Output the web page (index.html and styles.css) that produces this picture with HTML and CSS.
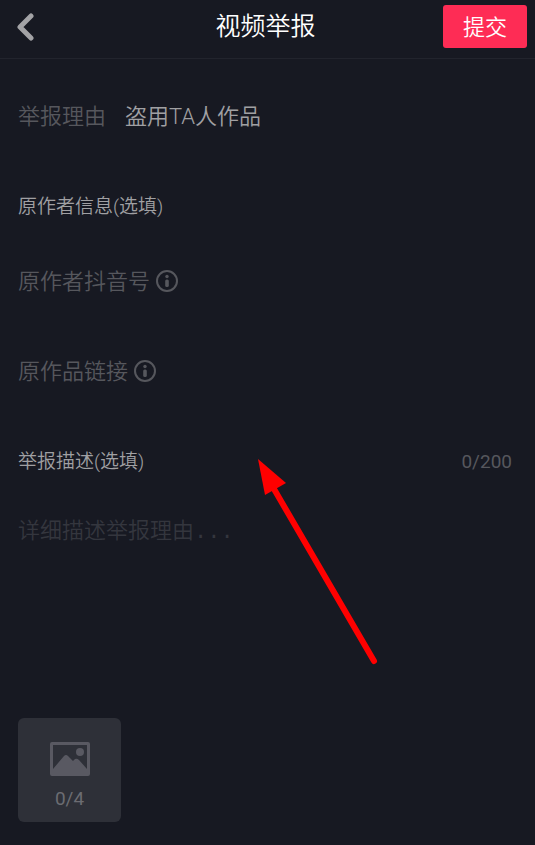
FILE: index.html
```html
<!DOCTYPE html>
<html lang="zh-CN">
<head>
    <meta charset="UTF-8">
    <meta name="viewport" content="width=device-width, initial-scale=1.0">
    <title>视频举报</title>
    <link rel="stylesheet" href="styles.css">
</head>
<body>
    <form class="report">
        <header class="header">
            <button type="button" class="back" aria-label="返回">
                <svg width="18" height="30" viewBox="0 0 18 30">
                    <path d="M14 4 L3 15 L14 26" />
                </svg>
            </button>
            <h1>视频举报</h1>
            <button type="submit" class="submit">提交</button>
        </header>

        <main class="content">
            <div class="row reason">
                <span class="label">举报理由</span>
                <span class="value">盗用TA人作品</span>
            </div>

            <h2>原作者信息(选填)</h2>
            <div class="row author">
                <label class="label" for="author">原作者抖音号</label>
                <svg class="info" width="24" height="24" viewBox="0 0 24 24">
                    <circle class="ring" cx="12" cy="11" r="10" />
                    <circle cx="12" cy="6.5" r="1.7" />
                    <rect x="10.2" y="9.5" width="3.6" height="7.5" rx="1.5" />
                </svg>
                <input type="text" id="author">
            </div>
            <div class="row">
                <label class="label" for="link">原作品链接</label>
                <svg class="info" width="24" height="24" viewBox="0 0 24 24">
                    <circle class="ring" cx="12" cy="11" r="10" />
                    <circle cx="12" cy="6.5" r="1.7" />
                    <rect x="10.2" y="9.5" width="3.6" height="7.5" rx="1.5" />
                </svg>
                <input type="text" id="link">
            </div>

            <div class="row desc-title">
                <h2><label for="desc">举报描述(选填)</label></h2>
                <span class="count">0/200</span>
            </div>
            <textarea id="desc" maxlength="200" placeholder="详细描述举报理由..."></textarea>

            <button type="button" class="photo">
                <svg width="40" height="36" viewBox="0 0 40 36">
                    <path fill-rule="evenodd" d="M2 1 H38 Q40 1 40 3 V33 Q40 35 38 35 H2 Q0 35 0 33 V3 Q0 1 2 1 Z M3 4 V28 L14 15 Q16 13 18 15 L23 20 L25 18 Q27 17 29 19 L37 28 V4 Z" />
                    <circle cx="30" cy="11" r="4" />
                </svg>
                <span>0/4</span>
            </button>
        </main>

        <svg class="arrow" width="120" height="208" viewBox="0 0 120 208">
            <path d="M16 31 L116 203" />
            <polygon points="0,1 28,25 7,37" />
        </svg>
    </form>
</body>
</html>
```
FILE: styles.css
```css
* {
    box-sizing: border-box;
}
body {
    margin: 0;
    background-color: #171922;
    color: #a0a0a3;
    font-family: Roboto, "Noto Sans CJK SC", sans-serif;
    font-size: 22px;
    font-weight: 350;
    line-height: 30px;
}
.report {
    position: relative;
    min-height: 100vh;
}
button, input, textarea {
    margin: 0;
    padding: 0;
    border: none;
    outline: none;
    background: none;
    color: inherit;
    font: inherit;
}
button {
    cursor: pointer;
}

/* Header */
.header {
    display: grid;
    grid-template-columns: 1fr auto 1fr;
    align-items: center;
    padding: 5px 8px 10px 4px;
    border-bottom: 1px solid #22242d;
}
.header h1 {
    margin: 0;
    color: #fff;
    font-size: 25px;
    font-weight: inherit;
}
.back {
    justify-self: start;
    display: flex;
    padding: 0 13px;
}
.back path {
    fill: none;
    stroke: #a3a3a6;
    stroke-width: 5;
    stroke-linecap: round;
    stroke-linejoin: round;
}
.submit {
    justify-self: end;
    height: 43px;
    padding: 2px 20px 0;
    border-radius: 3px;
    background-color: #fe2c55;
    color: #fff;
}

/* Form rows */
.content {
    padding: 43px 23px 20px 18px;
}
.row {
    display: flex;
    align-items: center;
    margin-bottom: 60px;
}
.reason {
    gap: 19px;
}
h2 {
    margin: 0;
    font-size: 19px;
    font-weight: inherit;
}
.author {
    margin-top: 45px;
}
.label {
    color: #56575d;
}
.row input {
    flex: 1;
    min-width: 0;
}
.info {
    margin-left: 5px;
    fill: #56575d;
}
.ring {
    fill: none;
    stroke: #56575d;
    stroke-width: 2;
}
.desc-title {
    justify-content: space-between;
    margin-bottom: 41px;
}
.count {
    color: #56575d;
    font-size: 19px;
    font-weight: 400;
}
textarea {
    display: block;
    width: 100%;
    height: 200px;
    resize: none;
    font-family: "Liberation Mono", "Noto Sans CJK SC", monospace;
}
textarea::placeholder {
    color: #34363e;
    opacity: 1;
}

/* Photo upload */
.photo {
    display: flex;
    flex-direction: column;
    align-items: center;
    justify-content: center;
    gap: 7px;
    width: 103px;
    height: 104px;
    padding-top: 14px;
    border-radius: 6px;
    background-color: #2e3038;
    color: #6b6c72;
    font-size: 19px;
    font-weight: 400;
}
.photo svg {
    fill: #595962;
}

/* Pointer over the form */
.arrow {
    position: absolute;
    top: 458px;
    left: 258px;
    fill: #f00;
    pointer-events: none;
}
.arrow path {
    stroke: #f00;
    stroke-width: 6;
    stroke-linecap: round;
}
```
